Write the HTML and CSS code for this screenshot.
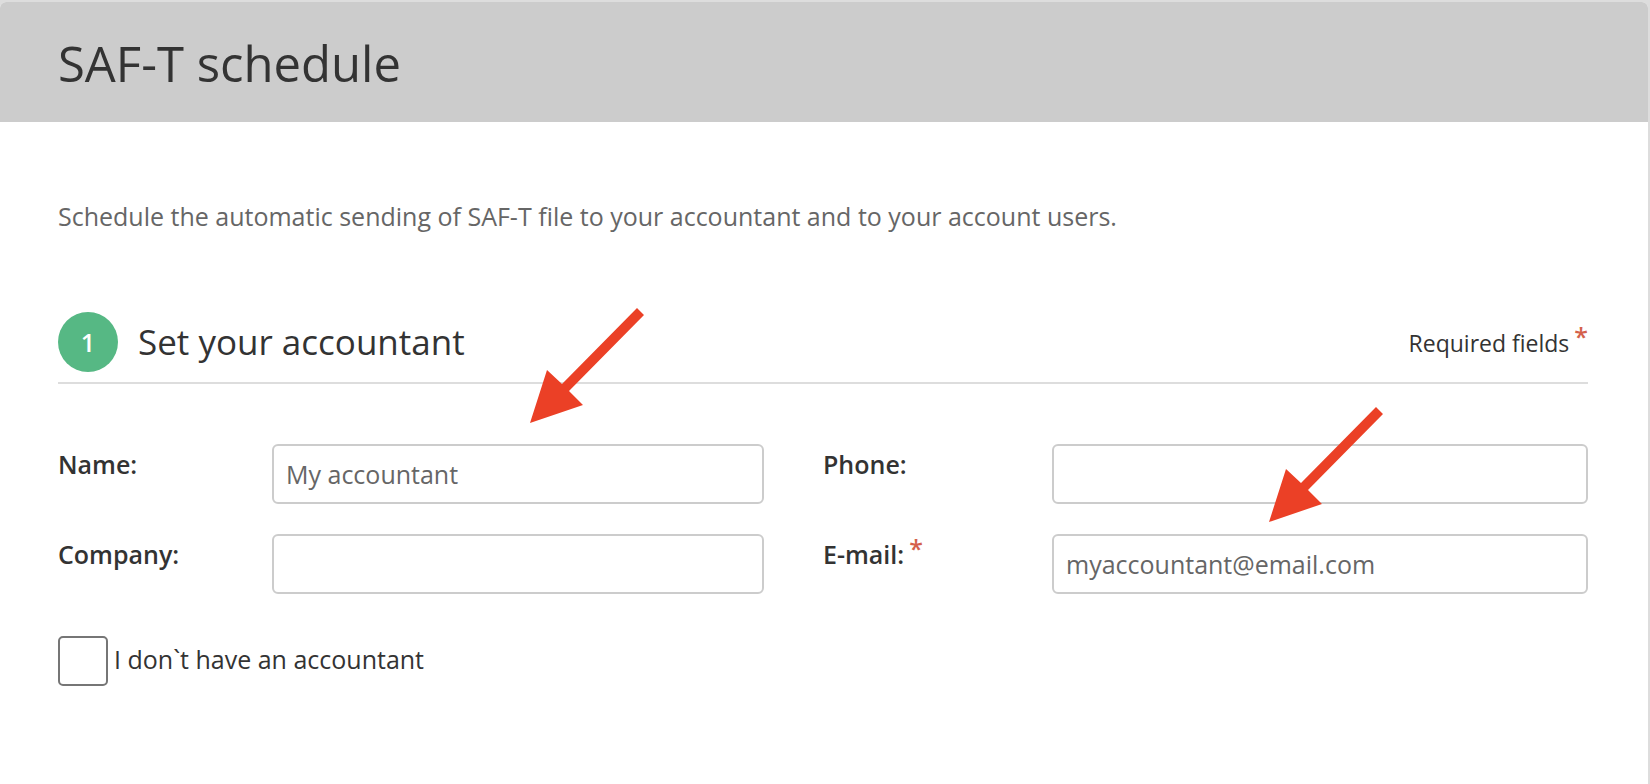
FILE: index.html
```html
<!DOCTYPE html>
<html lang="en">
<head>
    <meta charset="UTF-8">
    <meta name="viewport" content="width=device-width, initial-scale=1.0">
    <title>SAF-T schedule</title>
    <link rel="stylesheet" href="styles.css">
</head>
<body>
    <main class="card">
        <header class="card-header">
            <h1>SAF-T schedule</h1>
        </header>
        <div class="card-body">
            <p class="intro">Schedule the automatic sending of SAF-T file to your accountant and to your account users.</p>
            <form id="accountantForm">
                <div class="step">
                    <span class="step-number">1</span>
                    <h2>Set your accountant</h2>
                    <span class="required-note">Required fields<span class="required">*</span></span>
                </div>
                <div class="fields">
                    <div class="form-group">
                        <label for="name">Name:</label>
                        <div class="control">
                            <input type="text" id="name" value="My accountant">
                            <svg class="arrow arrow-name" width="114" height="115" viewBox="0 0 114 115" aria-hidden="true">
                                <path d="M0 115 L17 62 L32 76 L107 0 L114 7 L39 83 L53 97 Z"/>
                            </svg>
                        </div>
                    </div>
                    <div class="form-group">
                        <label for="phone">Phone:</label>
                        <div class="control">
                            <input type="tel" id="phone">
                        </div>
                    </div>
                    <div class="form-group">
                        <label for="company">Company:</label>
                        <div class="control">
                            <input type="text" id="company">
                        </div>
                    </div>
                    <div class="form-group">
                        <label for="email">E-mail:<span class="required">*</span></label>
                        <div class="control">
                            <input type="email" id="email" value="myaccountant@email.com" required>
                            <svg class="arrow arrow-email" width="114" height="115" viewBox="0 0 114 115" aria-hidden="true">
                                <path d="M0 115 L17 62 L32 76 L107 0 L114 7 L39 83 L53 97 Z"/>
                            </svg>
                        </div>
                    </div>
                </div>
                <div class="checkbox">
                    <input type="checkbox" id="noAccountant">
                    <label for="noAccountant">I don`t have an accountant</label>
                </div>
            </form>
        </div>
    </main>
</body>
</html>
```

FILE: styles.css
```css
* {
    box-sizing: border-box;
}
body {
    font-family: "Open Sans", "Noto Sans", sans-serif;
    font-size: 25px;
    line-height: 36px;
    color: #333;
    background-color: #ddd;
    margin: 0;
}
h1, h2, p {
    margin: 0;
    font-weight: normal;
}
.card {
    background-color: #fff;
    margin: 2px 2px 0 0;
    min-height: calc(100vh - 2px);
    border-radius: 6px 6px 0 0;
    overflow: hidden;
}
.card-header {
    background-color: #ccc;
    padding: 29px 60px 27px 58px;
}
.card-header h1 {
    font-size: 49px;
    line-height: 64px;
}
.card-body {
    padding: 76px 60px 60px 58px;
}
.intro {
    color: #666;
    margin-bottom: 78px;
}
.step {
    display: flex;
    align-items: center;
    padding-bottom: 10px;
    border-bottom: 2px solid #ddd;
}
.step-number {
    width: 60px;
    height: 60px;
    line-height: 60px;
    margin-right: 20px;
    border-radius: 50%;
    background-color: #56b884;
    color: #fff;
    font-weight: 600;
    text-align: center;
}
.step h2 {
    font-size: 35px;
    line-height: 48px;
}
.required-note {
    margin-left: auto;
    font-size: 23px;
}
.required {
    color: #d4614b;
    margin-left: 5px;
    font-size: 25px;
    font-weight: 600;
    position: relative;
    top: -6px;
}
.fields {
    display: grid;
    grid-template-columns: 1fr 1fr;
    row-gap: 30px;
    margin-top: 60px;
}
.form-group {
    display: flex;
}
.form-group:nth-child(odd) {
    padding-right: 59px;
}
.form-group label {
    width: 229px;
    padding-top: 2px;
    font-weight: 600;
}
.form-group:nth-child(odd) label {
    width: 214px;
}
.control {
    flex: 1;
    position: relative;
}
.control input {
    display: block;
    width: 100%;
    height: 60px;
    padding: 0 12px;
    border: 2px solid #ccc;
    border-radius: 6px;
    background-color: #fff;
    color: #666;
    font: inherit;
}
/* red pointers over the fields to fill in */
.arrow {
    position: absolute;
    bottom: 100%;
    fill: #eb4026;
    pointer-events: none;
}
.arrow-name {
    left: 258px;
    margin-bottom: 21px;
}
.arrow-email {
    left: 217px;
    margin-bottom: 12px;
}
.checkbox {
    display: flex;
    align-items: center;
    gap: 6px;
    margin-top: 42px;
}
.checkbox input {
    appearance: none;
    width: 50px;
    height: 50px;
    margin: 0;
    border: 2px solid #767676;
    border-radius: 5px;
    background-color: #fff;
}
.checkbox input:checked {
    background-color: #56b884;
}
.checkbox label {
    padding-bottom: 4px;
}
```
